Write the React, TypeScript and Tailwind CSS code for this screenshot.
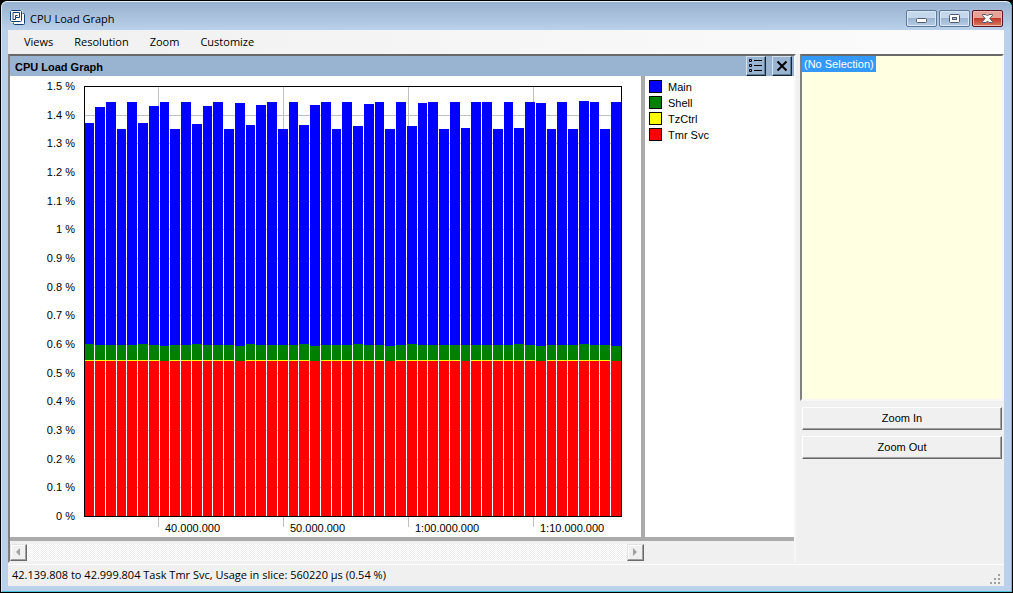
import { ReactNode, useState } from 'react';

type Task = { name: string; swatch: string };

const tasks: Task[] = [
  { name: 'Main', swatch: 'bg-[#0000ff]' },
  { name: 'Shell', swatch: 'bg-[#008000]' },
  { name: 'TzCtrl', swatch: 'bg-[#ffff00]' },
  { name: 'Tmr Svc', swatch: 'bg-[#ff0000]' },
];

const menus = ['Views', 'Resolution', 'Zoom', 'Customize'];

// plot area inside the chart svg
const LEFT = 74;
const RIGHT = 611;
const TOP = 10;
const BOTTOM = 440;
const PITCH = 10.75;

// total load per slice, as the top edge of the bar
const tops = [
  47, 31, 26, 53, 26, 47, 30, 26, 53, 26, 48, 30, 26, 53, 27, 49, 29, 26, 53, 26,
  49, 29, 26, 53, 26, 50, 28, 26, 53, 26, 50, 27, 26, 53, 26, 52, 26, 26, 53, 26,
  52, 26, 27, 53, 26, 53, 25, 26, 53, 26,
];
const shellHigh = [0, 5, 10, 15, 20, 25, 30, 40, 46];
const shellLow = [7, 14, 21, 28, 42, 49];
const noTzCtrl = [...shellLow, 35];

const yLabels = ['1.5 %', '1.4 %', '1.3 %', '1.2 %', '1.1 %', '1 %', '0.9 %', '0.8 %', '0.7 %', '0.6 %', '0.5 %', '0.4 %', '0.3 %', '0.2 %', '0.1 %', '0 %'];
const xTicks = [
  { x: 148, label: '40.000.000' },
  { x: 273, label: '50.000.000' },
  { x: 398, label: '1:00.000.000' },
  { x: 523, label: '1:10.000.000' },
];

export default function App() {
  const [status] = useState('42.139.808 to 42.999.804 Task Tmr Svc, Usage in slice: 560220 µs (0.54 %)');

  return (
    <div className="min-h-screen bg-black p-px font-['Liberation_Sans',sans-serif] text-[11px] text-black">
      <div className="flex min-h-[calc(100vh-2px)] flex-col rounded-t-md border border-t-[#e8f1fa] border-r-[#4cc5dc] border-b-[#4cc5dc] border-l-[#d5e5f5] bg-[#b9d1ea] pr-[7px] pb-[5px] pl-1.5">
        <TitleBar />
        <main className="flex flex-1 flex-col bg-[#f0f0f0]">
          <nav className="flex h-6 items-center gap-[21px] bg-linear-to-r from-[#f0f0f0] to-[#fcfcfc] pl-4 font-['Open_Sans',sans-serif]">
            {menus.map(m => <button key={m} type="button">{m}</button>)}
          </nav>
          <div className="flex flex-1 gap-1">
            <GraphPanel />
            <SidePanel />
          </div>
          <footer className="mt-px flex h-[22px] items-center justify-between border-t border-white pl-1 font-['Open_Sans',sans-serif]">
            <span>{status}</span>
            <Grip />
          </footer>
        </main>
      </div>
    </div>
  );
}

function TitleBar() {
  return (
    <header className="-mr-[7px] -ml-1.5 flex h-7 items-center rounded-t-md bg-linear-to-b from-[#98b1cf] to-[#b9d1ea] pt-1 pr-2 pl-2">
      <svg width="16" height="16" viewBox="0 0 16 16" fill="none" stroke="#123f73">
        <rect x="3.5" y="3.5" width="11" height="11" rx="1" fill="#fff" />
        <rect x="0.5" y="0.5" width="11" height="11" rx="1" fill="#fff" stroke="#fff" strokeWidth="2" />
        <rect x="0.5" y="0.5" width="11" height="11" rx="1" />
        <path d="M3 9.500V2.500H9.500V7.500H5.500V5.500H7.500M5.500 7.500V9.500H3" />
      </svg>
      <h1 className="ml-1 flex-1 pt-0.5 font-['Open_Sans',sans-serif]">CPU Load Graph</h1>
      <div className="flex gap-0.5">
        <CaptionButton label="Minimize">
          <rect x="9.5" y="7.5" width="10" height="4" rx="1" fill="#fff" stroke="#53596b" />
        </CaptionButton>
        <CaptionButton label="Maximize">
          <rect x="9.5" y="3.5" width="10" height="8" rx="1" fill="#fff" stroke="#53596b" />
          <rect x="12.5" y="6.5" width="4" height="2" fill="#a9c0da" stroke="#53596b" />
        </CaptionButton>
        <CaptionButton label="Close" danger>
          <path d="M9.500 3.500H13L14.500 5 16 3.500H19.500V4.500L16.800 7.500 19.500 10.500V11.500H16L14.500 10 13 11.500H9.500V10.500L12.200 7.500 9.500 4.500Z" fill="#fff" stroke="#53596b" />
        </CaptionButton>
      </div>
    </header>
  );
}

function CaptionButton({ label, danger, children }: { label: string; danger?: boolean; children: ReactNode }) {
  return (
    <button
      type="button"
      aria-label={label}
      className={`h-[17px] w-[31px] rounded-xs border ${danger
        ? 'border-[#5b1421] bg-linear-to-b from-[#e5a297] from-45% via-[#c0392b] via-50% to-[#d9785f] shadow-[inset_0_0_0_1px_#f0b8ae]'
        : 'border-[#5f7898] bg-linear-to-b from-[#c3d7ed] from-45% via-[#9bb5d1] via-50% to-[#b6cde6] shadow-[inset_0_0_0_1px_#dae8f6]'}`}
    >
      <svg width="29" height="15" viewBox="0 0 29 15">{children}</svg>
    </button>
  );
}

function GraphPanel() {
  return (
    <section className="flex flex-1 flex-col border-2 border-t-[#696969] border-r-[#f7f7f7] border-b-[#f0f0f0] border-l-[#808080] bg-white">
      <div className="flex h-5 items-center bg-[#99b4d1] pr-0.5 pl-[5px]">
        <h2 className="flex-1 pt-0.5 font-bold">CPU Load Graph</h2>
        <div className="flex gap-1.5">
          <ToolButton label="Legend">
            <path d="M2.500 2.500h2v2h-2zM2.500 7.500h2v2h-2zM2.500 12.500h2v2h-2zM7 3.500h8M7 8.500h8M7 13.500h8" />
          </ToolButton>
          <ToolButton label="Close panel">
            <path d="M4.500 4.500l9 9M13.500 4.500l-9 9" strokeWidth="2" />
          </ToolButton>
        </div>
      </div>
      <div className="flex flex-1 border-b-4 border-[#ababab]">
        <div className="border-r-4 border-[#ababab]">
          <LoadChart />
        </div>
        <ul className="flex flex-col gap-[3px] pt-1 pl-1">
          {tasks.map(t => (
            <li key={t.name} className="flex h-[13px] items-center gap-1.5">
              <span className={`size-[13px] border border-black ${t.swatch}`} />
              <span className="pt-0.5">{t.name}</span>
            </li>
          ))}
        </ul>
      </div>
      <div className="bg-[#f0f0f0] pt-[3px]">
        <div className="flex h-[17px] w-[634px] justify-between bg-[repeating-conic-gradient(#f0f0f0_0_25%,#ffffff_0_50%)] bg-size-[2px_2px]">
          <ScrollButton label="Scroll left" d="M9 3v8l-4-4z" />
          <ScrollButton label="Scroll right" d="M5 3v8l4-4z" />
        </div>
      </div>
    </section>
  );
}

function ToolButton({ label, children }: { label: string; children: ReactNode }) {
  return (
    <button type="button" aria-label={label} className="size-5 border border-t-[#d4e2f0] border-r-[#14263a] border-b-[#14263a] border-l-[#d4e2f0] shadow-[inset_-1px_-1px_#5f7d9d]">
      <svg width="18" height="18" viewBox="0 0 18 18" fill="none" stroke="#000">{children}</svg>
    </button>
  );
}

function ScrollButton({ label, d }: { label: string; d: string }) {
  return (
    <button type="button" aria-label={label} className="size-[17px] border border-t-[#e3e3e3] border-r-[#696969] border-b-[#696969] border-l-[#e3e3e3] bg-[#f0f0f0] shadow-[inset_-1px_-1px_#a0a0a0,inset_1px_1px_#fff]">
      <svg width="15" height="15" viewBox="0 0 15 15"><path d={d} fill="#a0a0a0" /></svg>
    </button>
  );
}

function LoadChart() {
  const gridY = yLabels.map((_, i) => TOP + Math.round(i * (BOTTOM - TOP) / 15));

  return (
    <svg width="631" height="461" viewBox="0 0 631 461" shapeRendering="crispEdges" role="img" aria-label="CPU load per task">
      {gridY.map(y => <rect key={y} x={LEFT} y={y} width={RIGHT - LEFT} height="1" fill="#c0c0c0" />)}
      {xTicks.map(t => <rect key={t.x} x={t.x} y={TOP} width="1" height="441" fill="#c0c0c0" />)}
      {tops.map((top, i) => {
        const x = Math.ceil(LEFT + i * PITCH);
        const w = Math.ceil(LEFT + (i + 1) * PITCH) - x - 1;
        const shell = shellHigh.includes(i) ? 268 : shellLow.includes(i) ? 270 : 269;
        return (
          <g key={i}>
            <rect x={x} y={top} width={w} height={shell - top} fill="#0000ff" />
            <rect x={x} y={shell} width={w} height={285 - shell} fill="#008000" />
            {!noTzCtrl.includes(i) && <rect x={x} y="284" width={w} height="1" fill="#ffff00" />}
            <rect x={x} y="285" width={w} height={BOTTOM - 285} fill="#ff0000" />
          </g>
        );
      })}
      <rect x={LEFT + 0.5} y={TOP + 0.5} width={RIGHT - LEFT} height={BOTTOM - TOP} fill="none" stroke="#000" />
      {yLabels.map((label, i) => (
        <text key={label} x="65" y={gridY[i] + 4} textAnchor="end" fontSize="11">{label}</text>
      ))}
      {xTicks.map(t => <text key={t.label} x={t.x + 7} y="456" fontSize="11">{t.label}</text>)}
    </svg>
  );
}

function SidePanel() {
  return (
    <aside className="flex w-[204px] flex-col">
      <div className="h-[347px] border-2 border-t-[#696969] border-r-[#f7f7f7] border-b-[#f7f7f7] border-l-[#808080] bg-[#ffffe1]">
        <span className="inline-block h-4 bg-[#3399ff] px-0.5 leading-4 text-white">(No Selection)</span>
      </div>
      <div className="flex flex-col gap-1.5 px-0.5 pt-1.5">
        <PushButton>Zoom In</PushButton>
        <PushButton>Zoom Out</PushButton>
      </div>
    </aside>
  );
}

function PushButton({ children }: { children: ReactNode }) {
  return (
    <button type="button" className="h-[23px] border border-t-white border-r-[#696969] border-b-[#696969] border-l-white bg-[#f0f0f0] shadow-[inset_-1px_-1px_#a0a0a0]">
      {children}
    </button>
  );
}

function Grip() {
  return (
    <svg width="12" height="12" viewBox="0 0 12 12" fill="#a0a0a0" className="mt-2 mr-0.5">
      <path d="M8 0h2v2h-2zM4 4h2v2h-2zM8 4h2v2h-2zM0 8h2v2h-2zM4 8h2v2h-2zM8 8h2v2h-2z" />
    </svg>
  );
}
